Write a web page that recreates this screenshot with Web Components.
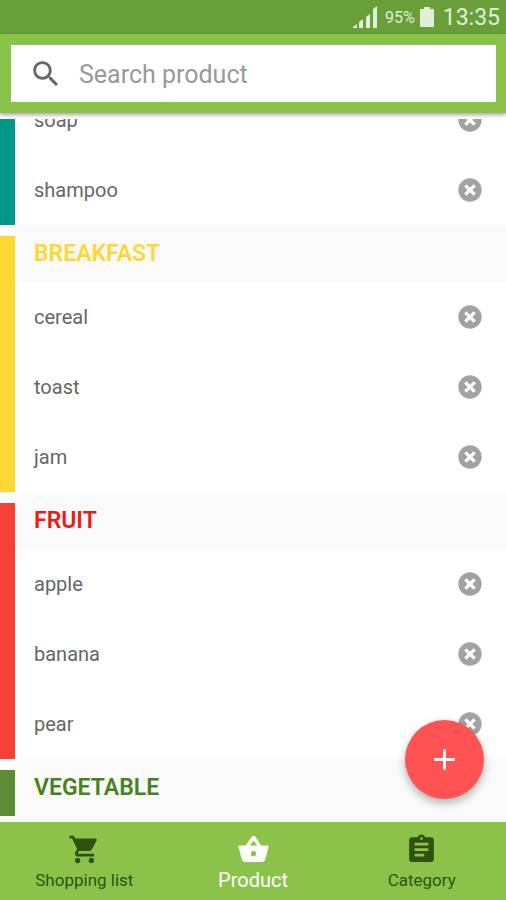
<!DOCTYPE html>
<html lang="en">
<head>
<meta charset="utf-8">
<meta name="viewport" content="width=device-width, initial-scale=1">
<title>Product</title>
<style>
    body {
        margin: 0;
        font-family: Roboto, "Liberation Sans", sans-serif;
        color: #666666;
        background: #ffffff;
    }
</style>
</head>
<body>
<shopping-app></shopping-app>

<script>
const CATEGORIES = [
    { name: "", bar: "#009688", text: "#009688", products: ["soap", "shampoo"] },
    { name: "BREAKFAST", bar: "#fdd835", text: "#fdd835", products: ["cereal", "toast", "jam"] },
    { name: "FRUIT", bar: "#f44336", text: "#e91c16", products: ["apple", "banana", "pear"] },
    { name: "VEGETABLE", bar: "#5b8b35", text: "#47831c", products: [] }
];

const ICONS = {
    search: "M15.5 14h-.79l-.28-.27C15.41 12.59 16 11.11 16 9.5 16 5.91 13.09 3 9.5 3S3 5.91 3 9.5 5.91 16 9.5 16c1.61 0 3.09-.59 4.23-1.57l.27.28v.79l5 4.99L20.49 19l-4.99-5zm-6 0C7.01 14 5 11.99 5 9.5S7.01 5 9.5 5 14 7.01 14 9.5 11.99 14 9.5 14z",
    cancel: "M12 2C6.47 2 2 6.47 2 12s4.47 10 10 10 10-4.47 10-10S17.53 2 12 2zm5 13-2 2-3-3-3 3-2-2 3-3-3-3 2-2 3 3 3-3 2 2-3 3z",
    add: "M19 13h-6v6h-2v-6H5v-2h6V5h2v6h6v2z",
    cart: "M7 18c-1.1 0-1.99.9-1.99 2S5.9 22 7 22s2-.9 2-2-.9-2-2-2zM1 2v2h2l3.6 7.59-1.35 2.45c-.16.28-.25.61-.25.96 0 1.1.9 2 2 2h12v-2H7.42c-.14 0-.25-.11-.25-.25l.03-.12.9-1.63h7.45c.75 0 1.41-.41 1.75-1.03l3.58-6.49c.08-.14.12-.31.12-.48 0-.55-.45-1-1-1H5.21l-.94-2H1zm16 16c-1.1 0-1.99.9-1.99 2s.89 2 1.99 2 2-.9 2-2-.9-2-2-2z",
    basket: "M17.6 9l-4.5-6.56c-.25-.28-.68-.42-1.1-.42-.42 0-.85.14-1.1.43L6.4 9H2c-.55 0-1 .45-1 1 0 .09.01.18.04.27l2.54 9.27c.23.84 1 1.46 1.92 1.46h13c.92 0 1.69-.62 1.93-1.46l2.54-9.27L23 10c0-.55-.45-1-1-1h-4.4zM9.4 9l2.6-3.6L14.6 9H9.4zm2.6 8c-1.1 0-2-.9-2-2s.9-2 2-2 2 .9 2 2-.9 2-2 2z",
    clipboard: "M19 3h-4.18C14.4 1.84 13.3 1 12 1c-1.3 0-2.4.84-2.82 2H5c-1.1 0-2 .9-2 2v14c0 1.1.9 2 2 2h14c1.1 0 2-.9 2-2V5c0-1.1-.9-2-2-2zm-7 0c.55 0 1 .45 1 1s-.45 1-1 1-1-.45-1-1 .45-1 1-1zm2 14H7v-2h7v2zm3-4H7v-2h10v2zm0-4H7V7h10v2z"
};

class AppIcon extends HTMLElement {
    connectedCallback() {
        const shadow = this.attachShadow({ mode: "open" });
        shadow.innerHTML = `
        <style>
        :host {
            display: block;
            flex: none;
            width: var(--icon-size, 32px);
            height: var(--icon-size, 32px);
        }

        svg {
            display: block;
            width: 100%;
            height: 100%;
            fill: currentColor;
        }
        </style>
        <svg viewBox="0 0 24 24" aria-hidden="true"><path d="${ICONS[this.getAttribute("name")]}"/></svg>
        `;
    }
}

class StatusBar extends HTMLElement {
    connectedCallback() {
        const shadow = this.attachShadow({ mode: "open" });
        shadow.innerHTML = `
        <style>
        :host {
            display: flex;
            flex: none;
            align-items: center;
            justify-content: flex-end;
            height: 34px;
            padding: 0 6px;
            background: #689f38;
            color: #e1eed8;
        }

        svg {
            fill: currentColor;
        }

        .battery-level {
            margin: 0 5px 0 8px;
            font-size: 16px;
        }

        .time {
            margin-left: 9px;
            font-size: 23px;
        }
        </style>
        <svg width="24" height="22" viewBox="0 0 24 22" aria-hidden="true">
            <path d="M0 22v-1l4-3v4zM6 22v-6l4-3v9zM13 22V11l4-3v14zM20 22V3l4-3v22z"/>
        </svg>
        <span class="battery-level">95%</span>
        <svg width="14" height="20" viewBox="0 0 14 20" aria-hidden="true">
            <path d="M4 0h6v2h4v18H0V2h4z"/>
        </svg>
        <span class="time">13:35</span>
        `;
    }
}

class SearchBar extends HTMLElement {
    connectedCallback() {
        const shadow = this.attachShadow({ mode: "open" });
        shadow.innerHTML = `
        <style>
        :host {
            display: block;
            flex: none;
            position: relative;
            z-index: 1;
            padding: 11px 10px 11px 11px;
            background: #8bc34a;
            box-shadow: 0 2px 4px rgba(0, 0, 0, 0.35);
        }

        label {
            display: flex;
            align-items: center;
            height: 57px;
            padding: 0 18px;
            background: #ffffff;
            --icon-size: 34px;
        }

        input {
            flex: 1;
            min-width: 0;
            margin-left: 16px;
            padding: 2px 0 0;
            border: 0;
            outline: 0;
            background: none;
            color: #444444;
            font: inherit;
            font-size: 25px;
        }

        input::placeholder {
            color: #999999;
            opacity: 1;
        }
        </style>
        <label>
            <app-icon name="search"></app-icon>
            <input type="text" placeholder="Search product" aria-label="Search product">
        </label>
        `;
    }
}

class ProductRow extends HTMLElement {
    connectedCallback() {
        const shadow = this.attachShadow({ mode: "open" });
        shadow.innerHTML = `
        <style>
        :host {
            display: flex;
            align-items: center;
            justify-content: space-between;
            height: 70px;
            padding: 0 22px 0 19px;
            background: #ffffff;
            font-size: 20px;
        }

        button {
            padding: 0;
            border: 0;
            background: none;
            color: #a2a2a2;
            cursor: pointer;
            --icon-size: 28px;
        }
        </style>
        <slot></slot>
        <button type="button" aria-label="Remove"><app-icon name="cancel"></app-icon></button>
        `;
        shadow.querySelector("button").addEventListener("click", () => this.remove());
    }
}

class CategoryGroup extends HTMLElement {
    connectedCallback() {
        const shadow = this.attachShadow({ mode: "open" });
        shadow.innerHTML = `
        <style>
        :host {
            display: flex;
            background: #fafafa;
        }

        .rail {
            flex: none;
            width: 15px;
            padding-top: 11px;
            box-sizing: border-box;
            background: linear-gradient(var(--bar-color), var(--bar-color)) content-box, #ffffff;
        }

        .content {
            flex: 1;
            min-width: 0;
        }

        ::slotted(h2) {
            margin: 0;
            padding: 0 19px;
            color: var(--title-color);
            font-size: 23px;
            font-weight: 600;
            line-height: 57px;
        }
        </style>
        <div class="rail"></div>
        <div class="content">
            <slot name="title"></slot>
            <slot></slot>
        </div>
        `;
    }
}

class ProductList extends HTMLElement {
    connectedCallback() {
        const shadow = this.attachShadow({ mode: "open" });
        const groups = CATEGORIES.map(category => `
            <category-group style="--bar-color: ${category.bar}; --title-color: ${category.text}">
                ${category.name ? `<h2 slot="title">${category.name}</h2>` : ""}
                ${category.products.map(product => `<product-row>${product}</product-row>`).join("")}
            </category-group>`).join("");
        shadow.innerHTML = `
        <style>
        :host {
            display: block;
            flex: 1;
            min-height: 0;
            margin-top: 6px;
            overflow-y: auto;
            scrollbar-width: none;
        }

        .groups {
            padding-bottom: 6px;
            background: #fafafa;
        }
        </style>
        <div class="groups">${groups}</div>
        `;
        // open at the end of the list
        requestAnimationFrame(() => this.scrollTop = this.scrollHeight);
        this.scrollTop = this.scrollHeight;
    }
}

class AddButton extends HTMLElement {
    connectedCallback() {
        const shadow = this.attachShadow({ mode: "open" });
        shadow.innerHTML = `
        <style>
        :host {
            display: block;
            position: absolute;
            right: 22px;
            bottom: 23px;
        }

        button {
            display: flex;
            align-items: center;
            justify-content: center;
            width: 79px;
            height: 79px;
            padding: 0;
            border: 0;
            border-radius: 50%;
            background: #ff5252;
            color: #ffffff;
            box-shadow: 0 4px 8px rgba(0, 0, 0, 0.3);
            cursor: pointer;
            --icon-size: 35px;
        }
        </style>
        <button type="button" aria-label="Add product"><app-icon name="add"></app-icon></button>
        `;
    }
}

class NavItem extends HTMLElement {
    connectedCallback() {
        const shadow = this.attachShadow({ mode: "open" });
        shadow.innerHTML = `
        <style>
        :host {
            display: block;
            flex: 1;
            color: #2f5212;
            font-size: 17px;
            --icon-size: 33px;
        }

        :host([active]) {
            color: #ffffff;
            font-size: 20px;
        }

        a {
            display: flex;
            flex-direction: column;
            align-items: center;
            justify-content: flex-end;
            height: 78px;
            padding-bottom: 8px;
            box-sizing: border-box;
            color: inherit;
            line-height: 24px;
            text-decoration: none;
        }

        app-icon {
            margin-bottom: 2px;
        }
        </style>
        <a href="#${this.getAttribute("icon")}">
            <app-icon name="${this.getAttribute("icon")}"></app-icon>
            <slot></slot>
        </a>
        `;
    }
}

class ShoppingApp extends HTMLElement {
    connectedCallback() {
        const shadow = this.attachShadow({ mode: "open" });
        shadow.innerHTML = `
        <style>
        :host {
            display: flex;
            flex-direction: column;
            height: 100vh;
        }

        main {
            display: flex;
            flex-direction: column;
            flex: 1;
            min-height: 0;
            position: relative;
        }

        nav {
            display: flex;
            flex: none;
            background: #8bc34a;
        }
        </style>
        <status-bar></status-bar>
        <search-bar></search-bar>
        <main>
            <product-list></product-list>
            <add-button></add-button>
        </main>
        <nav>
            <nav-item icon="cart">Shopping list</nav-item>
            <nav-item icon="basket" active>Product</nav-item>
            <nav-item icon="clipboard">Category</nav-item>
        </nav>
        `;
    }
}

customElements.define("app-icon", AppIcon);
customElements.define("status-bar", StatusBar);
customElements.define("search-bar", SearchBar);
customElements.define("product-row", ProductRow);
customElements.define("category-group", CategoryGroup);
customElements.define("product-list", ProductList);
customElements.define("add-button", AddButton);
customElements.define("nav-item", NavItem);
customElements.define("shopping-app", ShoppingApp);
</script>
</body>
</html>
